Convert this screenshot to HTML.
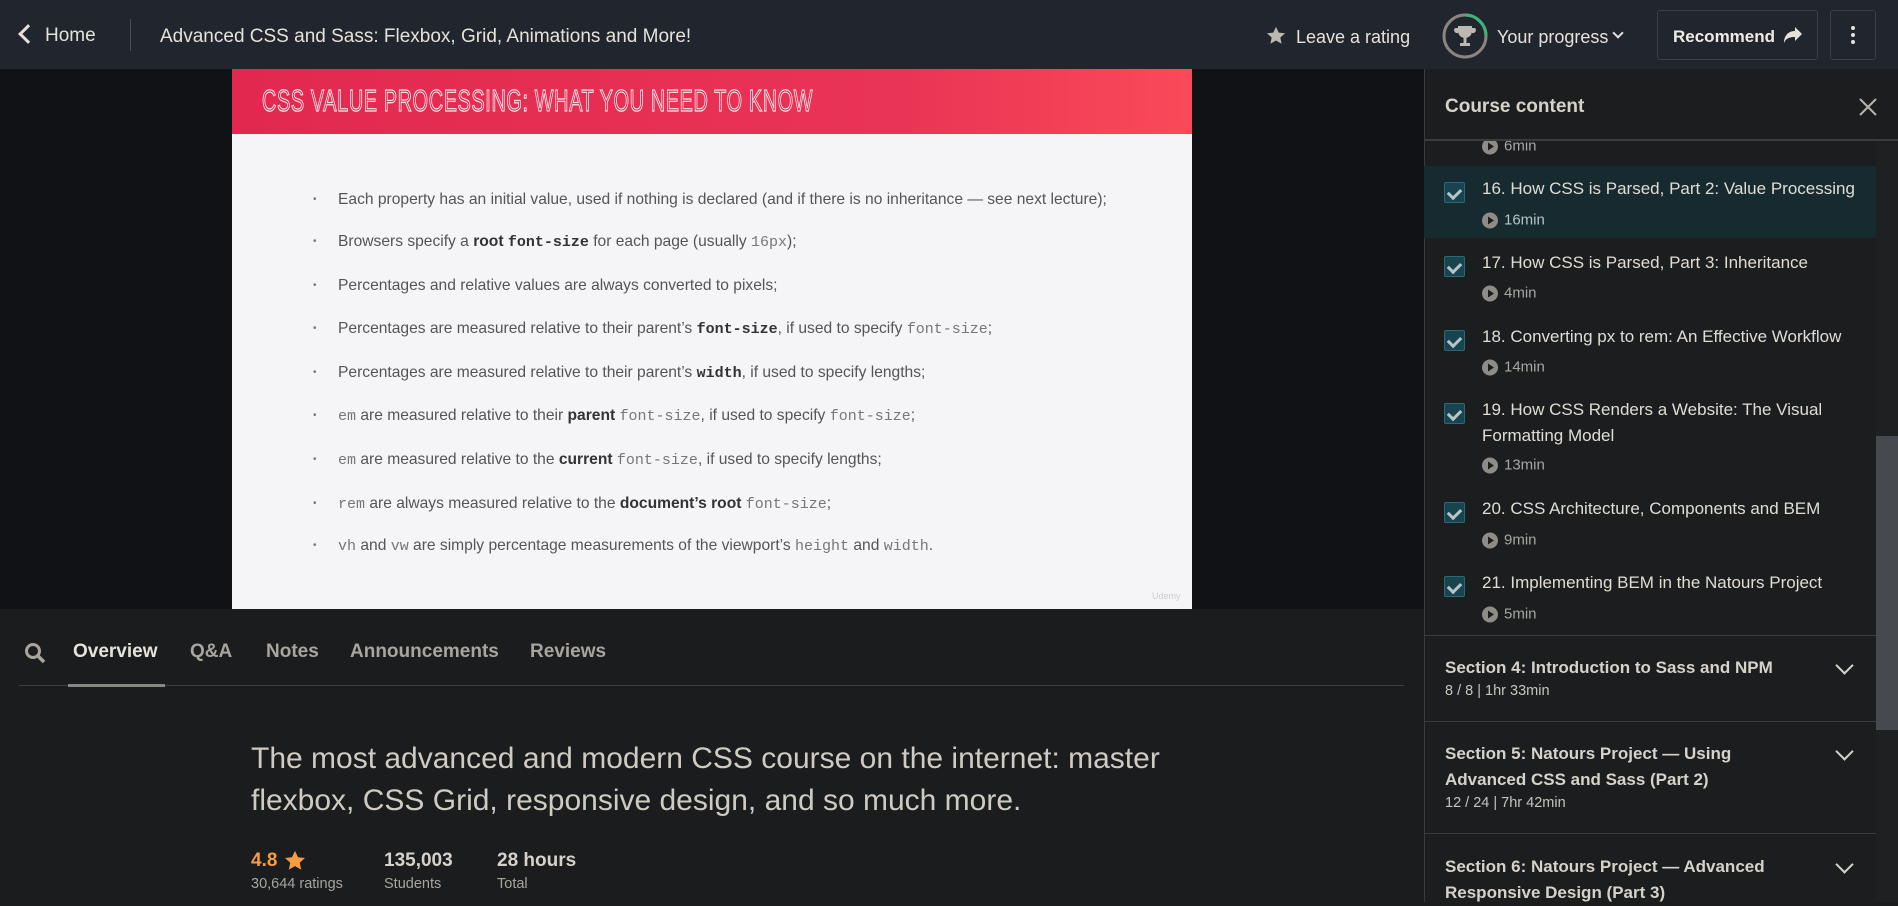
<!DOCTYPE html>
<html><head><meta charset="utf-8"><style>
*{margin:0;padding:0;box-sizing:border-box}
body{width:1898px;height:902px;overflow:hidden;background:#1b1c1e;font-family:"Liberation Sans",sans-serif;color:#d6d2c9;position:relative}
.a{position:absolute;white-space:nowrap}
.hdr{left:0;top:0;width:1898px;height:69px;background:#21252d}
.vid{left:0;top:69px;width:1424px;height:540px;background:#111215}
.slide{left:232px;top:69px;width:960px;height:540px;background:#f5f4f7}
.ban{left:0;top:0;width:960px;height:65px;background:linear-gradient(90deg,#e2284f,#ea3455 70%,#fa4a58)}
.bt{font-size:31px;color:#e2284f;-webkit-text-stroke:1.2px #ffe3e8;left:30px;top:14px;letter-spacing:1px;transform:scaleX(0.64);transform-origin:0 0}
.bl{left:106px;font-size:15.6px;color:#555;transform:translateY(-50%)}
.bl::before{content:"•";position:absolute;left:-25px;font-size:10px;top:3px;color:#777}
.m{font-family:"Liberation Mono",monospace;font-size:15px;color:#777}
.mb{font-family:"Liberation Mono",monospace;font-size:15px;font-weight:bold;color:#333}
.bl b{color:#333}
.side{left:1424px;top:69px;width:474px;height:833px;background:#1c1d1f;border-left:1px solid #3a3c3f}
.it{left:1482px;font-size:17px;color:#e0dcd3;transform:translateY(-50%)}
.tm{left:1482px;font-size:15px;color:#a9a6a0;transform:translateY(-50%);padding-left:22px}
.tm::before{content:"";position:absolute;left:0;top:1px;width:16px;height:16px;border-radius:50%;background:#8f8c88}
.tm::after{content:"";position:absolute;left:6px;top:5px;border-left:6px solid #1c1d1f;border-top:4px solid transparent;border-bottom:4px solid transparent}
.cb{left:1444px;width:21px;height:21px;background:#17444f;border:1px solid #2a6a78;border-radius:2px}
.cb::after{content:"";position:absolute;left:5px;top:3px;width:6px;height:10px;border-right:3px solid #b9c4c6;border-bottom:3px solid #b9c4c6;transform:rotate(45deg)}
.st{left:1445px;font-size:17px;font-weight:bold;color:#d6d2c9;line-height:26px}
.ss{left:1445px;font-size:14.5px;color:#c8c4bc}
.chev{left:1838px;width:13px;height:13px;border-right:2.5px solid #d6d2c9;border-bottom:2.5px solid #d6d2c9;transform:rotate(45deg)}
.sep{left:1424px;width:452px;height:1px;background:#3a3c3f}
.tab{top:641px;font-size:19px;font-weight:bold;color:#a9a59d}
</style></head><body>
<div class="a hdr"></div>
<div class="a" style="left:21px;top:27px;width:14px;height:14px;border-left:3px solid #e6e2da;border-bottom:3px solid #e6e2da;transform:rotate(45deg)"></div>
<div class="a" style="left:45px;top:25px;font-size:19px;color:#e6e2da">Home</div>
<div class="a" style="left:130px;top:19px;width:1px;height:32px;background:#4a4e56"></div>
<div class="a" style="left:160px;top:26px;font-size:19px;color:#e6e2da">Advanced CSS and Sass: Flexbox, Grid, Animations and More!</div>
<svg class="a" style="left:1266px;top:26px" width="20" height="19" viewBox="0 0 24 23"><path d="M12 1l3.3 7 7.6.8-5.7 5.2 1.6 7.5L12 17.6 5.2 21.5l1.6-7.5L1.1 8.8 8.7 8z" fill="#bdb9b1"/></svg>
<div class="a" style="left:1296px;top:27px;font-size:18px;color:#e6e2da">Leave a rating</div>
<svg class="a" style="left:1442px;top:13px" width="46" height="46" viewBox="0 0 46 46"><circle cx="23" cy="23" r="21" fill="none" stroke="#8a867f" stroke-width="3"/><path d="M23 2 A21 21 0 0 1 44 23" fill="none" stroke="#3cb37a" stroke-width="3"/><path d="M16 13h14v5a7 7 0 0 1-14 0z M16 15h-3a3 3 0 0 0 3 5 M30 15h3a3 3 0 0 1-3 5 M21.5 25h3v5h-3z M18 30h10v3H18z" fill="#bdb9b1"/></svg>
<div class="a" style="left:1497px;top:27px;font-size:18px;color:#e6e2da">Your progress</div>
<div class="a" style="left:1614px;top:29px;width:8px;height:8px;border-right:2px solid #e6e2da;border-bottom:2px solid #e6e2da;transform:rotate(45deg)"></div>
<div class="a" style="left:1657px;top:10px;width:161px;height:50px;border:1px solid #3b3f47;border-radius:3px"></div>
<div class="a" style="left:1673px;top:27px;font-size:17px;font-weight:bold;color:#f0ece4">Recommend</div>
<svg class="a" style="left:1783px;top:26px" width="20" height="18" viewBox="0 0 20 18"><path d="M12 1l7 7-7 7v-4C7 11 3 12 1 17 1 10 5 5 12 5z" fill="#e6e2da"/></svg>
<div class="a" style="left:1830px;top:10px;width:46px;height:50px;border:1px solid #3b3f47;border-radius:3px"></div>
<div class="a" style="left:1851px;top:26px;width:4px;height:4px;border-radius:2px;background:#e6e2da;box-shadow:0 7px 0 #e6e2da,0 14px 0 #e6e2da"></div>

<div class="a vid"></div>
<div class="a slide">
 <div class="a ban"></div>
 <div class="a bt">CSS VALUE PROCESSING: WHAT YOU NEED TO KNOW</div>
 <div class="a bl" style="top:131px">Each property has an initial value, used if nothing is declared (and if there is no inheritance — see next lecture);</div>
 <div class="a bl" style="top:173px">Browsers specify a <b>root</b> <span class="mb">font-size</span> for each page (usually <span class="m">16px</span>);</div>
 <div class="a bl" style="top:217px">Percentages and relative values are always converted to pixels;</div>
 <div class="a bl" style="top:260px">Percentages are measured relative to their parent’s <span class="mb">font-size</span>, if used to specify <span class="m">font-size</span>;</div>
 <div class="a bl" style="top:304px">Percentages are measured relative to their parent’s <span class="mb">width</span>, if used to specify lengths;</div>
 <div class="a bl" style="top:347px"><span class="m">em</span> are measured relative to their <b>parent</b> <span class="m">font-size</span>, if used to specify <span class="m">font-size</span>;</div>
 <div class="a bl" style="top:391px"><span class="m">em</span> are measured relative to the <b>current</b> <span class="m">font-size</span>, if used to specify lengths;</div>
 <div class="a bl" style="top:435px"><span class="m">rem</span> are always measured relative to the <b>document’s root</b> <span class="m">font-size</span>;</div>
 <div class="a bl" style="top:477px"><span class="m">vh</span> and <span class="m">vw</span> are simply percentage measurements of the viewport’s <span class="m">height</span> and <span class="m">width</span>.</div>
 <div class="a" style="left:920px;top:522px;font-size:9px;color:#ccc">Udemy</div>
</div>

<svg class="a" style="left:24px;top:642px" width="22" height="22" viewBox="0 0 22 22"><circle cx="9" cy="9" r="6.5" fill="none" stroke="#a9a59d" stroke-width="3"/><path d="M14 14l6 6" stroke="#a9a59d" stroke-width="3.5"/></svg>
<div class="a tab" style="left:73px;color:#e6e2da">Overview</div>
<div class="a tab" style="left:190px">Q&amp;A</div>
<div class="a tab" style="left:266px">Notes</div>
<div class="a tab" style="left:350px">Announcements</div>
<div class="a tab" style="left:530px">Reviews</div>
<div class="a" style="left:19px;top:685px;width:1385px;height:1px;background:#3e3d38"></div>
<div class="a" style="left:68px;top:684px;width:97px;height:3px;background:#8a8780"></div>
<div class="a" style="left:251px;top:738px;font-size:30px;line-height:42px;color:#cfcbc2;white-space:normal;width:960px">The most advanced and modern CSS course on the internet: master flexbox, CSS Grid, responsive design, and so much more.</div>
<div class="a" style="left:251px;top:850px;font-size:19px;font-weight:bold;color:#f69c43">4.8</div>
<svg class="a" style="left:284px;top:850px" width="22" height="21" viewBox="0 0 24 23"><path d="M12 1l3.3 7 7.6.8-5.7 5.2 1.6 7.5L12 17.6 5.2 21.5l1.6-7.5L1.1 8.8 8.7 8z" fill="#f69c43"/></svg>
<div class="a" style="left:251px;top:876px;font-size:14.5px;color:#a9a59d">30,644 ratings</div>
<div class="a" style="left:384px;top:850px;font-size:19px;font-weight:bold;color:#d6d2c9">135,003</div>
<div class="a" style="left:384px;top:876px;font-size:14.5px;color:#a9a59d">Students</div>
<div class="a" style="left:497px;top:850px;font-size:19px;font-weight:bold;color:#d6d2c9">28 hours</div>
<div class="a" style="left:497px;top:876px;font-size:14.5px;color:#a9a59d">Total</div>

<div class="a side"></div>
<div class="a" style="left:1876px;top:142px;width:22px;height:760px;background:#1f2022"></div>
<div class="a" style="left:1876px;top:436px;width:22px;height:294px;background:#46494d"></div>
<div class="a" style="left:1424px;top:166px;width:452px;height:72px;background:#162a30"></div>
<div class="a tm" style="top:146px">6min</div>
<div class="a" style="left:1425px;top:69px;width:473px;height:72px;background:#1c1d1f;border-bottom:2px solid #3a3c3f"></div>
<div class="a" style="left:1445px;top:96px;font-size:19px;font-weight:bold;color:#d6d2c9">Course content</div>
<svg class="a" style="left:1859px;top:98px" width="18" height="18" viewBox="0 0 18 18"><path d="M1 1l16 16M17 1L1 17" stroke="#b8b4ac" stroke-width="2"/></svg>

<div class="a cb" style="top:182px"></div><div class="a it" style="top:189px">16. How CSS is Parsed, Part 2: Value Processing</div><div class="a tm" style="top:220px;color:#b8c3c4">16min</div>
<div class="a cb" style="top:256px"></div><div class="a it" style="top:263px">17. How CSS is Parsed, Part 3: Inheritance</div><div class="a tm" style="top:293px">4min</div>
<div class="a cb" style="top:330px"></div><div class="a it" style="top:337px">18. Converting px to rem: An Effective Workflow</div><div class="a tm" style="top:367px">14min</div>
<div class="a cb" style="top:403px"></div><div class="a it" style="top:410px">19. How CSS Renders a Website: The Visual</div><div class="a it" style="top:436px">Formatting Model</div><div class="a tm" style="top:465px">13min</div>
<div class="a cb" style="top:502px"></div><div class="a it" style="top:509px">20. CSS Architecture, Components and BEM</div><div class="a tm" style="top:540px">9min</div>
<div class="a cb" style="top:576px"></div><div class="a it" style="top:583px">21. Implementing BEM in the Natours Project</div><div class="a tm" style="top:614px">5min</div>
<div class="a sep" style="top:635px"></div>
<div class="a st" style="top:655px">Section 4: Introduction to Sass and NPM</div>
<div class="a ss" style="top:683px">8 / 8 | 1hr 33min</div>
<div class="a chev" style="top:659px"></div>
<div class="a sep" style="top:721px"></div>
<div class="a st" style="top:741px">Section 5: Natours Project — Using<br>Advanced CSS and Sass (Part 2)</div>
<div class="a ss" style="top:795px">12 / 24 | 7hr 42min</div>
<div class="a chev" style="top:745px"></div>
<div class="a sep" style="top:833px"></div>
<div class="a st" style="top:854px">Section 6: Natours Project — Advanced<br>Responsive Design (Part 3)</div>
<div class="a chev" style="top:858px"></div>
</body></html>
